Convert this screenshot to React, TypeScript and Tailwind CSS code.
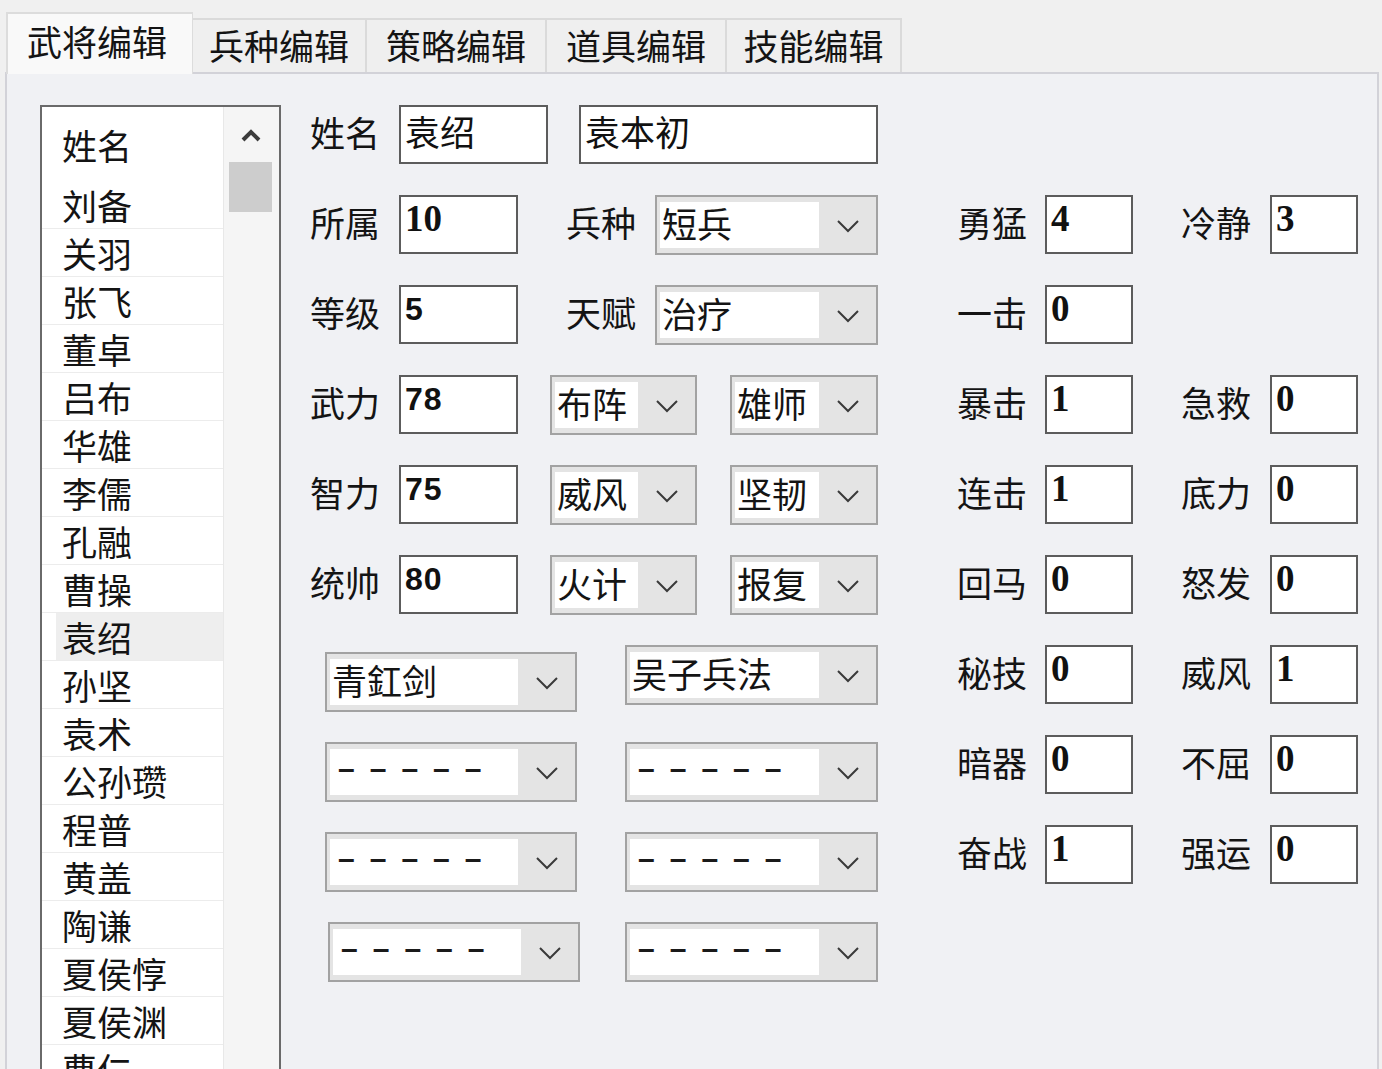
import React from 'react'

const CJK = "font-['Noto_Sans_CJK_SC',sans-serif]"
const SERIF_NUM = "font-['Liberation_Serif',serif] font-bold text-[37px] leading-[40px]"
const SANS_NUM = "font-['Liberation_Sans',sans-serif] font-black text-[32px] leading-[40px] tracking-[1px]"

const names = [
  '刘备', '关羽', '张飞', '董卓', '吕布', '华雄', '李儒', '孔融', '曹操', '袁绍',
  '孙坚', '袁术', '公孙瓒', '程普', '黄盖', '陶谦', '夏侯惇', '夏侯渊', '曹仁',
]

const tabs = [
  { label: '武将编辑', w: 'w-[187px]', active: true },
  { label: '兵种编辑', w: 'w-[174px]' },
  { label: '策略编辑', w: 'w-[180px]' },
  { label: '道具编辑', w: 'w-[180px]' },
  { label: '技能编辑', w: 'w-[175px]' },
]

function Chevron() {
  return (
    <svg width="24" height="14" viewBox="0 0 24 14" fill="none">
      <polyline points="2,2 12,12 22,2" stroke="#3a3a3a" strokeWidth="2" />
    </svg>
  )
}

function Label({ children, className = 'w-[89px]' }: { children: React.ReactNode; className?: string }) {
  return (
    <div className={`${className} h-[59px] flex items-center pb-[5px] text-[35px] text-[#141414] ${CJK}`}>
      {children}
    </div>
  )
}

function Box({ children, className, num }: { children?: React.ReactNode; className: string; num?: 'serif' | 'sans' }) {
  const font = num === 'serif' ? SERIF_NUM : num === 'sans' ? SANS_NUM : `${CJK} text-[35px] leading-[44px]`
  return (
    <div className={`${className} h-[59px] shrink-0 border-2 border-[#5c5c5c] bg-white pl-[4px] ${num ? 'pt-[2px]' : 'pt-[2px]'} text-[#111] ${font}`}>
      {children}
    </div>
  )
}

function Dashes() {
  return (
    <div className="flex gap-[15px] pl-[6px] pb-[4px] font-['Liberation_Sans',sans-serif] text-[30px] font-black text-[#1a1a1a]">
      <span>–</span><span>–</span><span>–</span><span>–</span><span>–</span>
    </div>
  )
}

function Combo({ children, className }: { children?: React.ReactNode; className: string }) {
  return (
    <div className={`${className} h-[60px] shrink-0 flex border-2 border-[#a2a2a2] bg-[#e4e4e4] py-[5px] pl-[3px]`}>
      <div className={`flex-1 bg-white flex items-center pl-[2px] pb-[3px] text-[35px] text-[#141414] ${CJK}`}>
        {children}
      </div>
      <div className="w-[57px] flex items-center justify-center pt-[2px]">
        <Chevron />
      </div>
    </div>
  )
}

function Stats({ a, av, b, bv }: { a: string; av: string; b?: string; bv?: string }) {
  return (
    <div className="ml-[79px] flex">
      <Label className="w-[88px]">{a}</Label>
      <Box className="w-[88px]" num="serif">{av}</Box>
      {b && (
        <>
          <Label className="ml-[48px] w-[89px]">{b}</Label>
          <Box className="w-[88px]" num="serif">{bv}</Box>
        </>
      )}
    </div>
  )
}

function NameList() {
  return (
    <div className="w-[241px] h-[1000px] shrink-0 border-2 border-[#6a6a6a] bg-white flex">
      <div className="w-[181px] flex flex-col">
        <div className={`h-[74px] pl-[20px] pt-[16px] text-[35px] leading-[44px] text-[#141414] ${CJK}`}>姓名</div>
        {names.map((n) => (
          <div key={n} className="h-[48px] shrink-0 border-b border-[#ececec] pl-[14px] flex">
            <div className={`flex-1 flex items-center pl-[6px] text-[35px] leading-[44px] text-[#141414] ${CJK} ${n === '袁绍' ? 'bg-[#eeeeee]' : ''}`}>
              {n}
            </div>
          </div>
        ))}
      </div>
      <div className="w-[56px] bg-[#f5f5f5] border-l border-[#e8e8e8] flex flex-col items-start pl-[5px]">
        <div className="w-[43px] h-[55px] flex items-center justify-center">
          <svg width="22" height="14" viewBox="0 0 22 14" fill="none">
            <polyline points="3,12 11,4 19,12" stroke="#3c3c3c" strokeWidth="4" />
          </svg>
        </div>
        <div className="w-[43px] h-[50px] bg-[#cdcdcd]" />
      </div>
    </div>
  )
}

export default function App() {
  return (
    <div className="w-[1382px] h-[1069px] overflow-hidden bg-[#f0f0f0] flex flex-col">
      <div className="h-[72px] shrink-0 flex items-end pl-[6px] pt-[10px]">
        {tabs.map((t) =>
          t.active ? (
            <div
              key={t.label}
              className={`${t.w} h-[62px] relative z-10 -mb-[2px] bg-[#f9f9f9] border-l-2 border-t-2 border-r border-[#dcdcdc] flex items-center justify-center pb-[6px] pr-[6px] text-[35px] text-[#141414] ${CJK}`}
            >
              {t.label}
            </div>
          ) : (
            <div
              key={t.label}
              className={`${t.w} h-[54px] bg-[#efefef] border-t-2 border-r-2 border-[#dadada] flex items-center justify-center pb-[2px] text-[35px] text-[#141414] ${CJK}`}
            >
              {t.label}
            </div>
          ),
        )}
      </div>
      <div className="flex-1 ml-[5px] mr-[3px] border-t-2 border-l-2 border-r-2 border-[#d2d2d8] bg-[#f0f1f4] pl-[33px] pt-[31px] flex">
        <NameList />
        <div className="ml-[29px] flex flex-col gap-[31px]">
          <div className="flex h-[59px]">
            <Label>姓名</Label>
            <Box className="w-[149px]">袁绍</Box>
            <Box className="ml-[31px] w-[299px]">袁本初</Box>
          </div>

          <div className="flex h-[59px]">
            <div className="w-[568px] flex">
              <Label>所属</Label>
              <Box className="w-[119px]" num="serif">10</Box>
              <Label className="ml-[48px] w-[89px]">兵种</Label>
              <Combo className="w-[223px]">短兵</Combo>
            </div>
            <Stats a="勇猛" av="4" b="冷静" bv="3" />
          </div>

          <div className="flex h-[59px]">
            <div className="w-[568px] flex">
              <Label>等级</Label>
              <Box className="w-[119px]" num="sans">5</Box>
              <Label className="ml-[48px] w-[89px]">天赋</Label>
              <Combo className="w-[223px]">治疗</Combo>
            </div>
            <Stats a="一击" av="0" />
          </div>

          <div className="flex h-[59px]">
            <div className="w-[568px] flex">
              <Label>武力</Label>
              <Box className="w-[119px]" num="sans">78</Box>
              <Combo className="ml-[32px] w-[147px]">布阵</Combo>
              <Combo className="ml-[33px] w-[148px]">雄师</Combo>
            </div>
            <Stats a="暴击" av="1" b="急救" bv="0" />
          </div>

          <div className="flex h-[59px]">
            <div className="w-[568px] flex">
              <Label>智力</Label>
              <Box className="w-[119px]" num="sans">75</Box>
              <Combo className="ml-[32px] w-[147px]">威风</Combo>
              <Combo className="ml-[33px] w-[148px]">坚韧</Combo>
            </div>
            <Stats a="连击" av="1" b="底力" bv="0" />
          </div>

          <div className="flex h-[59px]">
            <div className="w-[568px] flex">
              <Label>统帅</Label>
              <Box className="w-[119px]" num="sans">80</Box>
              <Combo className="ml-[32px] w-[147px]">火计</Combo>
              <Combo className="ml-[33px] w-[148px]">报复</Combo>
            </div>
            <Stats a="回马" av="0" b="怒发" bv="0" />
          </div>

          <div className="flex h-[59px]">
            <div className="w-[568px] flex items-start">
              <Combo className="ml-[15px] mt-[7px] w-[252px]">青釭剑</Combo>
              <Combo className="ml-[48px] w-[253px]">吴子兵法</Combo>
            </div>
            <Stats a="秘技" av="0" b="威风" bv="1" />
          </div>

          <div className="flex h-[59px]">
            <div className="w-[568px] flex items-start">
              <Combo className="ml-[15px] mt-[7px] w-[252px]"><Dashes /></Combo>
              <Combo className="ml-[48px] mt-[7px] w-[253px]"><Dashes /></Combo>
            </div>
            <Stats a="暗器" av="0" b="不屈" bv="0" />
          </div>

          <div className="flex h-[59px]">
            <div className="w-[568px] flex items-start">
              <Combo className="ml-[15px] mt-[7px] w-[252px]"><Dashes /></Combo>
              <Combo className="ml-[48px] mt-[7px] w-[253px]"><Dashes /></Combo>
            </div>
            <Stats a="奋战" av="1" b="强运" bv="0" />
          </div>

          <div className="flex h-[59px]">
            <div className="w-[568px] flex items-start">
              <Combo className="ml-[18px] mt-[7px] w-[252px]"><Dashes /></Combo>
              <Combo className="ml-[45px] mt-[7px] w-[253px]"><Dashes /></Combo>
            </div>
          </div>
        </div>
      </div>
    </div>
  )
}
